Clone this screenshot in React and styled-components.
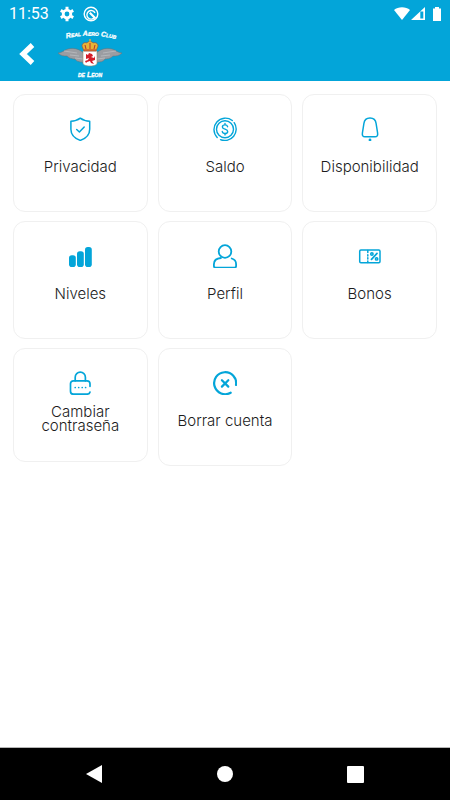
import React from "react"
import styled, { createGlobalStyle, ThemeProvider } from "styled-components"

const theme = {
  colors: {
    primary: "#03a5d9",
    background: "#ffffff",
    border: "#f0f0f0",
    text: "#1c1c1c",
  },
}

const GlobalStyle = createGlobalStyle`
  * {
    box-sizing: border-box;
  }
  body {
    margin: 0;
    background: ${theme.colors.background};
    font-family: Inter, "Liberation Sans", sans-serif;
  }
  button {
    border: 0;
    padding: 0;
    background: none;
    color: inherit;
    font: inherit;
    cursor: pointer;
  }
  svg {
    display: block;
    flex-shrink: 0;
  }
`

const StyledScreen = styled.div`
  display: flex;
  flex-direction: column;
  min-height: 100vh;
`

const StyledTop = styled.div`
  background: ${({ theme }) => theme.colors.primary};
  color: #fff;
`

const StyledStatusBar = styled.div`
  display: flex;
  align-items: center;
  justify-content: space-between;
  height: 27px;
  padding: 0 8px 0 9px;
`

const StyledStatusGroup = styled.div`
  display: flex;
  align-items: center;
`

const StyledTime = styled.time`
  width: 50px;
  font-family: Roboto, sans-serif;
  font-size: 16px;
  line-height: 20px;
`

const StyledHeader = styled.header`
  display: flex;
  align-items: center;
  gap: 16px;
  height: 54px;
  padding: 0 16px 0 15px;
`

const StyledBackButton = styled.button`
  display: flex;
  align-items: center;
  justify-content: center;
  width: 24px;
  height: 32px;
`

const StyledGrid = styled.main`
  flex: 1;
  display: grid;
  grid-template-columns: repeat(3, 1fr);
  align-items: start;
  align-content: start;
  gap: 9px 10px;
  padding: 13px;
`

const StyledCard = styled.button`
  && {
    display: flex;
    flex-direction: column;
    align-items: center;
    gap: 8px;
    padding: 22px 8px 26px;
    border: 1px solid ${({ theme }) => theme.colors.border};
    border-radius: 12px;
    background: ${({ theme }) => theme.colors.background};
    color: ${({ theme }) => theme.colors.primary};
  }
`

const StyledLabel = styled.span`
  display: flex;
  align-items: center;
  justify-content: center;
  min-height: ${({ $compact }) => ($compact ? "32px" : "36px")};
  color: ${({ theme }) => theme.colors.text};
  font-size: 15px;
  font-weight: 300;
  line-height: 14px;
  text-align: center;
`

const StyledNavBar = styled.nav`
  display: flex;
  justify-content: center;
  height: 53px;
  border-top: 1px solid #b5b5b5;
  background: #000;
  color: #fff;
`

const StyledNavButton = styled.button`
  display: flex;
  align-items: center;
  justify-content: center;
  width: 130px;
`

const Icon = ({ children, width = 1.5 }) => (
  <svg
    width="24"
    height="24"
    viewBox="0 0 24 24"
    fill="none"
    stroke="currentColor"
    strokeWidth={width}
    strokeLinecap="round"
    strokeLinejoin="round"
    aria-hidden="true"
  >
    {children}
  </svg>
)

const ShieldIcon = () => (
  <Icon>
    <path d="M12.3 1.2C9.8 3.1 6.2 4.2 2.9 4.2v8c0 5.2 3.9 9.2 9.4 11.2 5.5-2 9.4-6 9.4-11.2v-8c-3.3 0-6.9-1.1-9.4-3z" />
    <path d="m8.7 12.5 2.7 2.5 4.8-5" />
  </Icon>
)

const CoinIcon = () => (
  <Icon width={1.4}>
    <circle cx="12" cy="12.2" r="8.5" />
    <path d="M4.2 20.5A11.4 11.4 0 0 1 19.3 3.5M21.2 5.7A11.4 11.4 0 0 1 7.5 22.7" />
    <path d="M14.6 9.7c-.3-1.2-1.2-1.8-2.6-1.8s-2.6.7-2.6 2c0 3 5.3 1.500 5.3 4.500 0 1.400-1.200 2.100-2.700 2.100s-2.500-.7-2.700-2M12 6.500v1.400M12 16.500v1.400" />
  </Icon>
)

const BellIcon = () => (
  <Icon width={1.5}>
    <path d="M12 1C8.600 1 6.300 3.100 5.900 6.500L4.400 16c-.4 2.600.5 3.700 2.600 3.700h10c2.100 0 3-1.100 2.600-3.700l-1.500-9.500C17.700 3.100 15.400 1 12 1z" />
    <circle cx="12" cy="23" r="1.400" fill="currentColor" stroke="none" />
  </Icon>
)

const LevelsIcon = () => (
  <Icon>
    <g fill="currentColor" stroke="none">
      <rect x="1" y="11.200" width="6.800" height="11.800" rx="2.800" />
      <rect x="9" y="7.200" width="6.800" height="15.800" rx="2.800" />
      <rect x="17" y="3" width="6.800" height="20" rx="2.800" />
    </g>
  </Icon>
)

const ProfileIcon = () => (
  <Icon width={1.8}>
    <circle cx="12" cy="7.500" r="6.300" />
    <path d="M8 14C3.500 14.300.9 16.800.9 20.200v1.800c0 1 .6 1.600 1.600 1.600h19c1 0 1.600-.6 1.600-1.600v-1.800c0-2.800-1.600-4.900-4.400-5.700" />
  </Icon>
)

const VoucherIcon = () => (
  <Icon width={1.5}>
    <rect x="1.700" y="6" width="20.300" height="12.800" rx="1.200" />
    <path d="M9.800 6.500v2M9.800 10.700v1.200M9.800 13.700v1.200M9.800 17v1.500" />
    <path d="m13.500 15.400 5.500-6" strokeWidth="1.700" />
    <circle cx="13.900" cy="10" r="1.200" />
    <circle cx="18.600" cy="14.900" r="1.200" />
  </Icon>
)

const LockIcon = () => (
  <Icon width={1.7}>
    <path d="M7.200 9.800V6.200a5 5 0 0 1 10.200 0v3.600" />
    <path d="M22 15.300v-2.500c0-1.900-1.100-3-3-3H5.500c-1.900 0-3 1.100-3 3v7.400c0 1.900 1.100 3 3 3H19c1.600 0 2.700-.8 3-2.200" />
    <path d="M7.200 16.500h.01M10.700 16.500h.01M14.200 16.500h.01M17.600 16.500h.01" />
  </Icon>
)

const DeleteIcon = () => (
  <Icon width={2.2}>
    <path d="M23 14A11 11 0 1 0 17.700 21.700" />
    <path d="m8.900 9.200 6.400 6.400M15.300 9.200l-6.400 6.400" />
  </Icon>
)

const feather =
  "M28 17C24 11 17 8 10 10 6 11 4 14 0 14c3 3 6 3 9 3 3 3 6 3 8 3 2 3 5 3 7 3l4 2z"

const Logo = () => (
  <svg width="70" height="54" viewBox="0 0 70 54">
    <title>Real Aero Club de Leon</title>
    <defs>
      <path id="club-arc" d="M4 13Q35 4 68 14" />
    </defs>
    <g
      fill="#fff"
      stroke="#fff"
      strokeWidth=".3"
      fontFamily="Liberation Sans, sans-serif"
      fontSize="7"
      fontStyle="italic"
      fontWeight="700"
      fontVariant="small-caps"
    >
      <text textAnchor="middle">
        <textPath href="#club-arc" startOffset="50%">
          Real Aero Club
        </textPath>
      </text>
      <text x="35" y="50" textAnchor="middle">
        de Leon
      </text>
    </g>
    <g fill="#9b9da2" stroke="#6d7075" strokeWidth=".5">
      <path d={feather} transform="translate(3 12)" />
      <path d={feather} transform="translate(67 12) scale(-1 1)" />
    </g>
    <path
      d="M9 24l13 2M15 28l9 1M20 31l8 1M61 24l-13 2M55 28l-9 1M50 31l-8 1"
      stroke="#bfc1c4"
      strokeWidth=".7"
    />
    <path
      d="M28 24h14v12c0 2-3 3-7 3s-7-1-7-3z"
      fill="#fff"
      stroke="#a0896d"
      strokeWidth=".6"
    />
    <path
      d="m31 27 2 1 1-2 3 1 1 2-2 1 3 1 1-2v4l-3 1 2 3-3-1-1-2-3 1-1 1-1-2 3-1 1-2-3 1z"
      fill="#d51d29"
    />
    <path
      d="M29 24l-2-5c0-3 3-4 5-3 1-2 5-2 6 0 2-1 5 0 5 3l-2 5z"
      fill="#e6b437"
      stroke="#a3462d"
      strokeWidth=".6"
    />
    <path d="M30 18l1 4M35 16v6M40 18l-1 4M29 23h12" stroke="#bb3028" />
    <path d="M35 12v3M34 13h2" stroke="#e6b437" />
  </svg>
)

const StatusBar = () => (
  <StyledStatusBar>
    <StyledStatusGroup>
      <StyledTime>11:53</StyledTime>
      <svg width="16" height="16" viewBox="0 0 16 16" fill="none" stroke="#fff">
        <circle cx="8" cy="8" r="3.800" strokeWidth="2.800" />
        <path
          d="M8 .8v2.500M8 12.700v2.500M1.800 4.400 4 5.700M12 10.300l2.200 1.300M1.800 11.600 4 10.300M12 5.700l2.200-1.300"
          strokeWidth="3"
        />
      </svg>
      <svg
        width="24"
        height="16"
        viewBox="-8 0 24 16"
        fill="none"
        stroke="#fff"
        strokeWidth="1.400"
      >
        <circle cx="8" cy="8" r="6.800" />
        <path d="M11.800 11.200A4.300 4.300 0 1 1 12 6.800" />
        <path d="m6.800 6.800 5.500 5.500" strokeWidth="2.200" />
      </svg>
    </StyledStatusGroup>
    <svg width="48" height="14" viewBox="0 0 48 14" fill="#fff">
      <path d="M0 3C4-.8 12-.8 16 3L8 13z" />
      <path d="M31 0v13H17zM29.300 4.500h-3v7h3z" fillRule="evenodd" />
      <path d="M41 0h4v1.500h2V14h-8V1.500h2z" />
    </svg>
  </StyledStatusBar>
)

const items = [
  { label: "Privacidad", icon: ShieldIcon },
  { label: "Saldo", icon: CoinIcon },
  { label: "Disponibilidad", icon: BellIcon },
  { label: "Niveles", icon: LevelsIcon },
  { label: "Perfil", icon: ProfileIcon },
  { label: "Bonos", icon: VoucherIcon },
  { label: "Cambiar contraseña", icon: LockIcon, compact: true },
  { label: "Borrar cuenta", icon: DeleteIcon },
]

const App = () => (
  <ThemeProvider theme={theme}>
    <GlobalStyle />
    <StyledScreen>
      <StyledTop>
        <StatusBar />
        <StyledHeader>
          <StyledBackButton type="button" aria-label="Volver">
            <svg width="16" height="22" viewBox="0 0 16 22" fill="none">
              <path d="M13.500 2 4 11l9.500 9" stroke="#fff" strokeWidth="5.200" />
            </svg>
          </StyledBackButton>
          <Logo />
        </StyledHeader>
      </StyledTop>
      <StyledGrid>
        {items.map(({ label, icon: ItemIcon, compact }) => (
          <StyledCard key={label} type="button">
            <ItemIcon />
            <StyledLabel $compact={compact}>{label}</StyledLabel>
          </StyledCard>
        ))}
      </StyledGrid>
      <StyledNavBar>
        <StyledNavButton type="button" aria-label="Atrás">
          <svg width="18" height="18" viewBox="0 0 18 18" fill="currentColor">
            <path d="M16 0v18L0 9z" />
          </svg>
        </StyledNavButton>
        <StyledNavButton type="button" aria-label="Inicio">
          <svg width="16" height="16" viewBox="0 0 16 16" fill="currentColor">
            <circle cx="8" cy="8" r="8" />
          </svg>
        </StyledNavButton>
        <StyledNavButton type="button" aria-label="Recientes">
          <svg width="17" height="17" viewBox="0 0 17 17" fill="currentColor">
            <rect width="17" height="17" rx="1" />
          </svg>
        </StyledNavButton>
      </StyledNavBar>
    </StyledScreen>
  </ThemeProvider>
)

export default App
